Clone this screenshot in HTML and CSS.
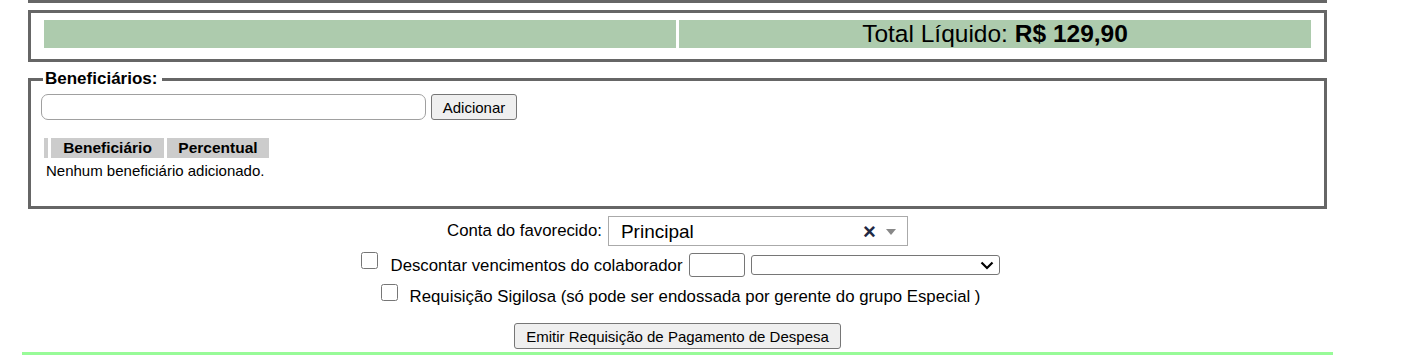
FILE: index.html
```html
<!DOCTYPE html>
<html lang="pt-BR">
<head>
    <meta charset="UTF-8">
    <meta name="viewport" content="width=device-width, initial-scale=1.0">
    <title>Requisição de Pagamento de Despesa</title>
    <link rel="stylesheet" href="styles.css">
</head>
<body>
    <div class="pagina">
        <div class="caixa anterior"></div>

        <div class="caixa total">
            <div class="celula"></div>
            <div class="celula">Total Líquido:&nbsp;<b>R$ 129,90</b></div>
        </div>

        <fieldset class="beneficiarios">
            <legend>Beneficiários:</legend>
            <div class="linhaAdd">
                <input type="text" class="campoNome">
                <button class="botao adicionar">Adicionar</button>
            </div>
            <table class="tabela">
                <tr>
                    <th class="colVazia"></th>
                    <th class="colNome">Beneficiário</th>
                    <th class="colPerc">Percentual</th>
                </tr>
            </table>
            <p class="vazio">Nenhum beneficiário adicionado.</p>
        </fieldset>

        <div class="opcoes">
            <div class="linha linhaConta">
                <label class="rotulo">Conta do favorecido:</label>
                <div class="select2">
                    <span class="select2Texto">Principal</span>
                    <span class="select2Limpar">×</span>
                    <span class="select2Seta"></span>
                </div>
            </div>
            <div class="linha linhaDesconto">
                <input type="checkbox" class="check">
                <span class="rotulo textoDesconto">Descontar vencimentos do colaborador</span>
                <input type="text" class="campoParcelas">
                <div class="caixaSelect">
                    <select class="selectDesconto"><option></option></select>
                    <!-- seta do select, desenhada por cima -->
                    <svg class="seta" width="14" height="9" viewBox="0 0 14 9">
                        <path d="M1.5 1.5 L7 7 L12.5 1.5" fill="none" stroke="#000" stroke-width="2.2"/>
                    </svg>
                </div>
            </div>
            <div class="linha linhaSigilo">
                <input type="checkbox" class="check">
                <span class="rotulo textoSigilo">Requisição Sigilosa (só pode ser endossada por gerente do grupo Especial )</span>
            </div>
            <button class="botao emitir">Emitir Requisição de Pagamento de Despesa</button>
        </div>

        <div class="rodape"></div>
    </div>
</body>
</html>
```

FILE: styles.css
```css
body {
    margin: 0;
    font-family: "Liberation Sans", Arial, sans-serif;
    font-size: 15px;
    color: #000;
    background: #fff;
}

.pagina {
    width: 1311px;
    margin-left: 22px;
}

.caixa {
    margin: 0 6px;
    border: 3px solid #666;
}

.anterior {
    border-top: none;
    height: 0;
}

.total {
    margin-top: 7px;
    display: flex;
    gap: 3px;
    padding: 7px 13px 11px 13px;
}

.celula {
    flex: 1;
    height: 28px;
    background-color: #adcbad;
    display: flex;
    align-items: center;
    justify-content: center;
    font-size: 24.5px;
}

.beneficiarios {
    margin: 7px 6px 0;
    border: 3px solid #666;
    padding: 0 10px 27px;
    min-width: 0;
}

.beneficiarios legend {
    font-weight: bold;
    font-size: 17px;
    padding: 0 5px 0 2px;
    margin-left: 2px;
}

.linhaAdd {
    display: flex;
    gap: 5px;
    margin-top: 5px;
}

.campoNome {
    box-sizing: border-box;
    width: 385px;
    height: 26px;
    margin: 0;
    border: 1px solid #a0a0a0;
    border-radius: 7px;
    outline: none;
}

.botao {
    box-sizing: border-box;
    height: 26px;
    margin: 0;
    padding: 0 11px;
    font-family: "Liberation Sans", Arial, sans-serif;
    font-size: 15px;
    color: #000;
    background-color: #efefef;
    border: 1px solid #767676;
    border-radius: 3px;
}

.adicionar {
    width: 86px;
    padding: 0;
}

.tabela {
    margin-top: 18px;
    border-spacing: 3px 0;
    border-collapse: separate;
}

.tabela th {
    height: 20px;
    padding: 0;
    background-color: #ccc;
    font-size: 15.5px;
    text-align: center;
}

.colVazia {
    width: 4px;
}

.colNome {
    width: 113px;
}

.colPerc {
    width: 102px;
}

.vazio {
    margin: 4px 0 0 5px;
}

.opcoes {
    display: flex;
    flex-direction: column;
    align-items: center;
}

.linha {
    display: flex;
    align-items: flex-start;
}

.rotulo {
    font-size: 16.8px;
}

.linhaConta {
    margin-top: 7px;
    align-items: center;
}

.linhaConta .rotulo {
    margin-right: 6px;
}

.select2 {
    box-sizing: border-box;
    width: 300px;
    height: 30px;
    border: 1px solid #aaa;
    display: flex;
    align-items: center;
    padding: 0 11px 0 12px;
}

.select2Texto {
    flex: 1;
    font-size: 19px;
    margin-top: 2px;
}

.select2Limpar {
    font-size: 22px;
    font-weight: bold;
    color: #1f2a44;
    margin-right: 10px;
    margin-top: 2px;
}

.select2Seta {
    width: 0;
    height: 0;
    border-left: 5.5px solid transparent;
    border-right: 5.5px solid transparent;
    border-top: 6px solid #888;
    margin-top: 2px;
}

.check {
    width: 17px;
    height: 17px;
    margin: 0 12px 0 0;
}

.linhaDesconto {
    margin-top: 6px;
    padding-left: 6px;
}

.linhaDesconto .check {
    margin-right: 13px;
}

.textoDesconto {
    margin-top: 4px;
    margin-right: 7px;
}

.campoParcelas {
    box-sizing: border-box;
    width: 56px;
    height: 24px;
    margin: 1px 6px 0 0;
    border: 1px solid #767676;
    border-radius: 3px;
}

.caixaSelect {
    position: relative;
    margin-top: 3px;
}

.selectDesconto {
    display: block;
    box-sizing: border-box;
    width: 249px;
    height: 20px;
    margin: 0;
    border: 1px solid #767676;
    border-radius: 3px;
    background: #fff;
    appearance: none;
    -webkit-appearance: none;
}

.seta {
    position: absolute;
    right: 6px;
    top: 6px;
    pointer-events: none;
}

.linhaSigilo {
    margin-top: 7px;
    padding-left: 6px;
}

.textoSigilo {
    margin-top: 3px;
}

.emitir {
    margin-top: 16px;
}

.rodape {
    margin-top: 3px;
    height: 4px;
    background-color: #98fb98;
}
```
